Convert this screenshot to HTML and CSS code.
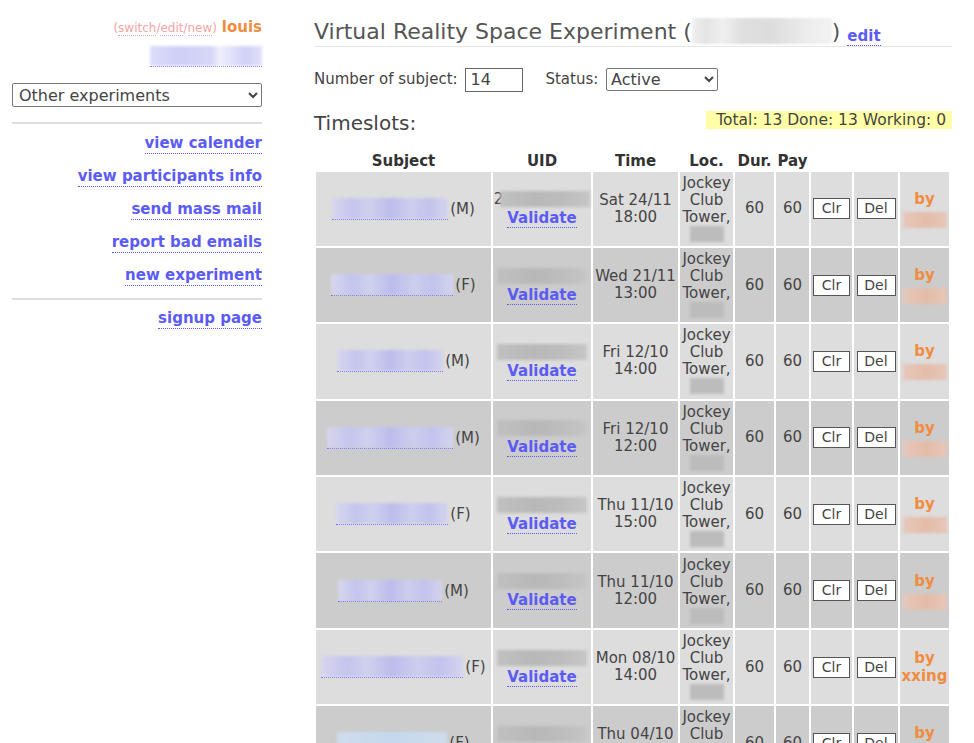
FILE: index.html
```html
<!DOCTYPE html>
<html>
<head>
<meta charset="utf-8">
<link rel="stylesheet" href="styles.css">
</head>
<body>
<div class="page">
  <aside class="sidebar">
    <div class="user"><span class="switch">(<a class="pink">switch</a>/<a class="pink">edit</a>/<a class="pink">new</a>)</span> <span class="uname">louis</span></div>
    <div class="acct"><a class="acct-link"><span class="blur blur-acct"></span></a></div>
    <select class="exp-select"><option>Other experiments</option></select>
    <div class="rule"></div>
    <div class="nav-item"><a class="lnk">view calender</a></div>
    <div class="nav-item"><a class="lnk">view participants info</a></div>
    <div class="nav-item"><a class="lnk">send mass mail</a></div>
    <div class="nav-item"><a class="lnk">report bad emails</a></div>
    <div class="nav-item"><a class="lnk">new experiment</a></div>
    <div class="rule rule2"></div>
    <div class="nav-item"><a class="lnk">signup page</a></div>
  </aside>
  <main class="main">
    <h1 class="title">Virtual Reality Space Experiment (<span class="blur blur-title"></span>) <a class="lnk edit">edit</a></h1>
    <div class="form-row">
      <label>Number of subject: <input class="num" type="text" value="14"></label>
      <label class="status">Status: <select class="status-select"><option>Active</option></select></label>
    </div>
    <div class="ts-row">
      <h2 class="ts-title">Timeslots:</h2>
      <div class="totals">Total: 13 Done: 13 Working: 0</div>
    </div>
    <table class="slots">
      <colgroup>
        <col class="c-subj"><col class="c-uid"><col class="c-time"><col class="c-loc"><col class="c-dur"><col class="c-pay"><col class="c-clr"><col class="c-del"><col class="c-by">
      </colgroup>
      <thead>
        <tr><th>Subject</th><th>UID</th><th>Time</th><th>Loc.</th><th>Dur.</th><th>Pay</th><th></th><th></th><th></th></tr>
      </thead>
      <tbody>
        <tr class="odd">
          <td><a class="name"><span class="blur blur-name" style="width:116px"></span></a>(M)</td>
          <td class="uid"><div class="uid-val"><span class="leak">2</span><span class="blur blur-uid"></span></div><a class="lnk val">Validate</a></td>
          <td>Sat 24/11<br>18:00</td>
          <td class="loc">Jockey<br>Club<br>Tower,<br><span class="blur blur-loc"></span></td>
          <td>60</td><td>60</td>
          <td><button class="btn btn-clr">Clr</button></td>
          <td><button class="btn btn-del">Del</button></td>
          <td class="by"><b>by</b><br><span class="blur blur-by"></span></td>
        </tr>
        <tr class="even">
          <td><a class="name"><span class="blur blur-name" style="width:122px"></span></a>(F)</td>
          <td class="uid"><div class="uid-val"><span class="blur blur-uid"></span></div><a class="lnk val">Validate</a></td>
          <td>Wed 21/11<br>13:00</td>
          <td class="loc">Jockey<br>Club<br>Tower,<br><span class="blur blur-loc"></span></td>
          <td>60</td><td>60</td>
          <td><button class="btn btn-clr">Clr</button></td>
          <td><button class="btn btn-del">Del</button></td>
          <td class="by"><b>by</b><br><span class="blur blur-by"></span></td>
        </tr>
        <tr class="odd">
          <td><a class="name"><span class="blur blur-name" style="width:106px"></span></a>(M)</td>
          <td class="uid"><div class="uid-val"><span class="blur blur-uid"></span></div><a class="lnk val">Validate</a></td>
          <td>Fri 12/10<br>14:00</td>
          <td class="loc">Jockey<br>Club<br>Tower,<br><span class="blur blur-loc"></span></td>
          <td>60</td><td>60</td>
          <td><button class="btn btn-clr">Clr</button></td>
          <td><button class="btn btn-del">Del</button></td>
          <td class="by"><b>by</b><br><span class="blur blur-by"></span></td>
        </tr>
        <tr class="even">
          <td><a class="name"><span class="blur blur-name" style="width:126px"></span></a>(M)</td>
          <td class="uid"><div class="uid-val"><span class="blur blur-uid"></span></div><a class="lnk val">Validate</a></td>
          <td>Fri 12/10<br>12:00</td>
          <td class="loc">Jockey<br>Club<br>Tower,<br><span class="blur blur-loc"></span></td>
          <td>60</td><td>60</td>
          <td><button class="btn btn-clr">Clr</button></td>
          <td><button class="btn btn-del">Del</button></td>
          <td class="by"><b>by</b><br><span class="blur blur-by"></span></td>
        </tr>
        <tr class="odd">
          <td><a class="name"><span class="blur blur-name" style="width:112px"></span></a>(F)</td>
          <td class="uid"><div class="uid-val"><span class="blur blur-uid"></span></div><a class="lnk val">Validate</a></td>
          <td>Thu 11/10<br>15:00</td>
          <td class="loc">Jockey<br>Club<br>Tower,<br><span class="blur blur-loc"></span></td>
          <td>60</td><td>60</td>
          <td><button class="btn btn-clr">Clr</button></td>
          <td><button class="btn btn-del">Del</button></td>
          <td class="by"><b>by</b><br><span class="blur blur-by"></span></td>
        </tr>
        <tr class="even">
          <td><a class="name"><span class="blur blur-name" style="width:104px"></span></a>(M)</td>
          <td class="uid"><div class="uid-val"><span class="blur blur-uid"></span></div><a class="lnk val">Validate</a></td>
          <td>Thu 11/10<br>12:00</td>
          <td class="loc">Jockey<br>Club<br>Tower,<br><span class="blur blur-loc"></span></td>
          <td>60</td><td>60</td>
          <td><button class="btn btn-clr">Clr</button></td>
          <td><button class="btn btn-del">Del</button></td>
          <td class="by"><b>by</b><br><span class="blur blur-by"></span></td>
        </tr>
        <tr class="odd">
          <td><a class="name"><span class="blur blur-name" style="width:142px"></span></a>(F)</td>
          <td class="uid"><div class="uid-val"><span class="blur blur-uid"></span></div><a class="lnk val">Validate</a></td>
          <td>Mon 08/10<br>14:00</td>
          <td class="loc">Jockey<br>Club<br>Tower,<br><span class="blur blur-loc"></span></td>
          <td>60</td><td>60</td>
          <td><button class="btn btn-clr">Clr</button></td>
          <td><button class="btn btn-del">Del</button></td>
          <td class="by"><b>by<br>xxing</b></td>
        </tr>
        <tr class="even">
          <td><a class="name"><span class="blur blur-name blue" style="width:110px"></span></a>(F)</td>
          <td class="uid"><div class="uid-val"><span class="blur blur-uid"></span></div><a class="lnk val">Validate</a></td>
          <td>Thu 04/10<br>10:00</td>
          <td class="loc">Jockey<br>Club<br>Tower,<br><span class="blur blur-loc"></span></td>
          <td>60</td><td>60</td>
          <td><button class="btn btn-clr">Clr</button></td>
          <td><button class="btn btn-del">Del</button></td>
          <td class="by"><b>by</b><br><span class="blur blur-by"></span></td>
        </tr>
      </tbody>
    </table>
  </main>
</div>
</body>
</html>
```

FILE: styles.css
```css
html, body {
  margin: 0;
  padding: 0;
  background: #fff;
}
body {
  font-family: "DejaVu Sans", sans-serif;
  color: #444;
  font-size: 15px;
}
.page {
  display: flex;
  gap: 52px;
  padding-left: 12px;
  align-items: flex-start;
}
.sidebar {
  width: 250px;
  flex: none;
  text-align: right;
  padding-top: 17px;
}
.user {
  line-height: 20px;
}
.switch {
  font-size: 12px;
  color: #f4a4a4;
}
.pink {
  color: #f4a4a4;
  border-bottom: 1px dotted #f4a4a4;
}
.uname {
  font-weight: bold;
  color: #f08c40;
  font-size: 15px;
}
.acct {
  margin-top: 8px;
  height: 24px;
}
.acct-link {
  display: inline-block;
  border-bottom: 1px dotted #5b5bf5;
  line-height: 0;
}
.blur {
  display: inline-block;
  vertical-align: middle;
}
.blur-acct {
  width: 112px;
  height: 20px;
  background: linear-gradient(90deg, #dcdcfa 0%, #cfcff7 25%, #d6d6f8 55%, #f0f0fc 62%, #d0d0f6 85%, #e0e0fa 100%);
  filter: blur(1.5px);
}
.exp-select {
  display: block;
  width: 250px;
  height: 24px;
  margin-top: 13px;
  font-family: inherit;
  font-size: 16px;
  color: #444;
  border: 1px solid #767676;
  border-radius: 2px;
  background: #fff;
  padding: 0 2px;
}
.rule {
  height: 2px;
  background: #dddddd;
  margin-top: 15px;
  margin-bottom: 3px;
}
.rule2 {
  margin-top: 6px;
  margin-bottom: 2px;
}
.nav-item {
  height: 33px;
  display: flex;
  justify-content: flex-end;
  align-items: center;
}
.lnk {
  color: #5b5bf5;
  font-weight: bold;
  font-size: 15px;
  border-bottom: 1px dotted #5b5bf5;
  line-height: 19px;
  cursor: pointer;
}
.main {
  width: 638px;
  flex: none;
  padding-top: 18px;
}
.title {
  margin: 0;
  font-size: 22px;
  font-weight: normal;
  color: #555;
  line-height: 27px;
  border-bottom: 1px solid #e6e6e6;
  padding-bottom: 0;
  white-space: nowrap;
}
.blur-title {
  width: 140px;
  height: 26px;
  margin-top: -4px;
  background: linear-gradient(90deg, #f0f0f0 0%, #e4e4e4 10%, #f0f0f0 22%, #e0e0e0 35%, #dcdcdc 55%, #eeeeee 85%, #f2f2f2 100%);
  filter: blur(1px);
}
.edit {
  vertical-align: -2px;
}
.form-row {
  margin-top: 20px;
  display: flex;
  align-items: center;
  gap: 22px;
  line-height: 24px;
}
.num {
  width: 58px;
  height: 24px;
  margin-left: 3px;
  box-sizing: border-box;
  border: 1px solid #666;
  font-family: inherit;
  font-size: 16px;
  color: #444;
  padding: 0 4px;
  vertical-align: middle;
}
.status-select {
  width: 112px;
  height: 23px;
  margin-left: 3px;
  font-family: inherit;
  font-size: 16px;
  color: #444;
  border: 1px solid #767676;
  border-radius: 2px;
  background: #fff;
  vertical-align: middle;
}
.ts-row {
  display: flex;
  justify-content: space-between;
  align-items: flex-start;
  margin-top: 19px;
}
.ts-title {
  margin: 0;
  font-size: 20px;
  font-weight: normal;
  color: #444;
  line-height: 25px;
}
.totals {
  background: #ffffa8;
  line-height: 18px;
  padding: 0 6px 0 10px;
  font-size: 15.5px;
  color: #444;
}
.slots {
  margin-top: 14px;
  margin-left: 0;
  border-spacing: 2px;
  table-layout: fixed;
  width: 637px;
}
.c-subj { width: 175px; }
.c-uid { width: 98px; }
.c-time { width: 85px; }
.c-loc { width: 53px; }
.c-dur { width: 39px; }
.c-pay { width: 33px; }
.c-clr { width: 41px; }
.c-del { width: 44px; }
.c-by { width: 49px; }
.slots th {
  font-weight: bold;
  color: #333;
  font-size: 15px;
  line-height: 18px;
  padding: 0;
  white-space: nowrap;
}
.slots td {
  text-align: center;
  vertical-align: middle;
  padding: 3px 0;
  line-height: 17px;
  white-space: nowrap;
  height: 68.4px;
  box-sizing: content-box;
}
tr.odd td { background: #dddddd; }
tr.even td { background: #cccccc; }
.name {
  display: inline-block;
  border-bottom: 1px dotted #5b5bf5;
  line-height: 0;
  vertical-align: middle;
  margin-right: 2px;
}
.blur-name {
  height: 21px;
  background: linear-gradient(90deg, #d6d6ee 0%, #c4c4ee 18%, #d0d0ee 32%, #bcbcec 50%, #cdcdee 68%, #c2c2ee 84%, #d4d4ee 100%);
  filter: blur(1.5px);
}
.blur-name.blue {
  background: linear-gradient(90deg, #d0dcec 0%, #c4d8ee 50%, #d0dcec 100%);
}
.uid-val {
  display: flex;
  justify-content: center;
  align-items: center;
  height: 18px;
  margin-bottom: 1px;
}
.leak {
  color: #444;
  margin-right: -3px;
}
.blur-uid {
  width: 90px;
  height: 16px;
  background: linear-gradient(90deg, #c0c0c0 0%, #b8b8b8 40%, #bcbcbc 70%, #c6c6c6 100%);
  filter: blur(1.5px);
}
.val {
  line-height: 18px;
}
.blur-loc {
  width: 34px;
  height: 16px;
  background: #bcbcbc;
  filter: blur(1.5px);
  vertical-align: top;
}
.btn {
  font-family: inherit;
  font-size: 14px;
  color: #444;
  background: #fff;
  border: 1px solid #555;
  border-radius: 0;
  padding: 0;
  line-height: 17px;
  height: 21px;
}
.btn-clr { width: 37px; }
.btn-del { width: 39px; }
.by b {
  color: #f08c40;
  font-size: 15px;
  line-height: 18px;
}
.blur-by {
  width: 44px;
  height: 16px;
  margin-top: 4px;
  background: linear-gradient(90deg, #e6c8bc 0%, #e4bca8 50%, #e6c6b8 100%);
  filter: blur(1.5px);
}
```
